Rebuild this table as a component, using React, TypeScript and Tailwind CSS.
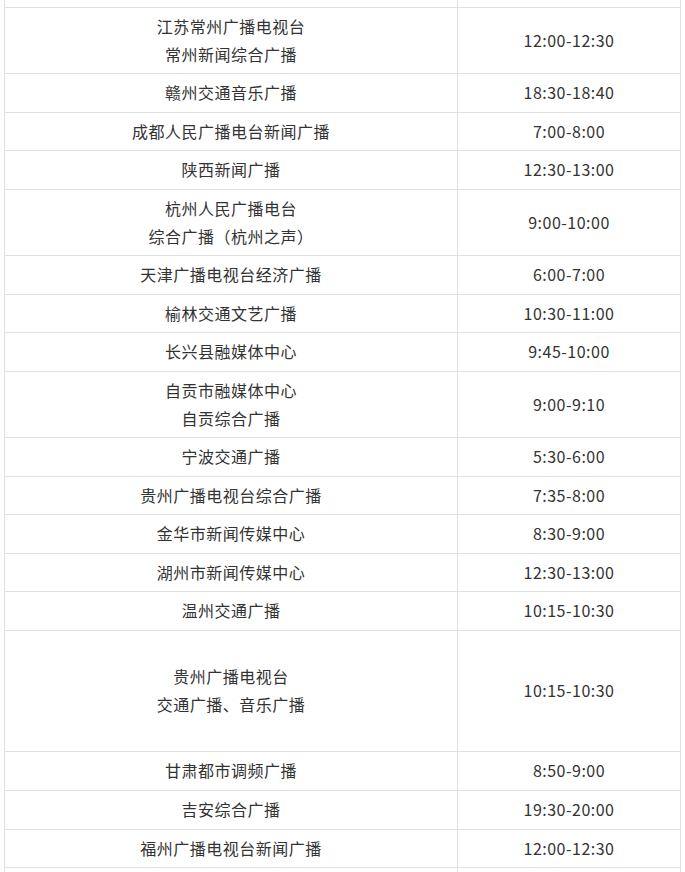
const rows: { name: string[]; time: string; h: string }[] = [
  { name: ["江苏常州广播电视台", "常州新闻综合广播"], time: "12:00-12:30", h: "h-[66px]" },
  { name: ["赣州交通音乐广播"], time: "18:30-18:40", h: "h-[39px]" },
  { name: ["成都人民广播电台新闻广播"], time: "7:00-8:00", h: "h-[38px]" },
  { name: ["陕西新闻广播"], time: "12:30-13:00", h: "h-[39px]" },
  { name: ["杭州人民广播电台", "综合广播（杭州之声）"], time: "9:00-10:00", h: "h-[66px]" },
  { name: ["天津广播电视台经济广播"], time: "6:00-7:00", h: "h-[39px]" },
  { name: ["榆林交通文艺广播"], time: "10:30-11:00", h: "h-[38px]" },
  { name: ["长兴县融媒体中心"], time: "9:45-10:00", h: "h-[39px]" },
  { name: ["自贡市融媒体中心", "自贡综合广播"], time: "9:00-9:10", h: "h-[66px]" },
  { name: ["宁波交通广播"], time: "5:30-6:00", h: "h-[39px]" },
  { name: ["贵州广播电视台综合广播"], time: "7:35-8:00", h: "h-[38px]" },
  { name: ["金华市新闻传媒中心"], time: "8:30-9:00", h: "h-[39px]" },
  { name: ["湖州市新闻传媒中心"], time: "12:30-13:00", h: "h-[38px]" },
  { name: ["温州交通广播"], time: "10:15-10:30", h: "h-[39px]" },
  { name: ["贵州广播电视台", "交通广播、音乐广播"], time: "10:15-10:30", h: "h-[121px]" },
  { name: ["甘肃都市调频广播"], time: "8:50-9:00", h: "h-[39px]" },
  { name: ["吉安综合广播"], time: "19:30-20:00", h: "h-[39px]" },
  { name: ["福州广播电视台新闻广播"], time: "12:00-12:30", h: "h-[38px]" },
];

export default function App() {
  return (
    <div
      className="w-[685px] h-[872px] overflow-hidden bg-white text-[#333] text-[16px] tracking-[0.5px] leading-[28px]"
      style={{ fontFamily: '"Noto Sans CJK SC", "Noto Sans", sans-serif' }}
    >
      <div className="ml-[4px] w-[677px] border-l border-r border-[#e0e0e0]">
        {/* partial row cut off at the top */}
        <div className="grid grid-cols-[453px_1fr] h-[7px]">
          <div className="border-r border-[#e0e0e0]" />
          <div />
        </div>
        {rows.map((r, i) => (
          <div key={i} className={`grid grid-cols-[453px_1fr] border-t border-[#e0e0e0] ${r.h}`}>
            <div className="flex flex-col items-center justify-center pb-[2px] border-r border-[#e0e0e0] text-center">
              {r.name.map((n) => (
                <p key={n}>{n}</p>
              ))}
            </div>
            <div className="flex items-center justify-center pb-[2px]">{r.time}</div>
          </div>
        ))}
        <div className="grid grid-cols-[453px_1fr] border-t border-[#e0e0e0] h-[20px]">
          <div className="border-r border-[#e0e0e0]" />
          <div />
        </div>
      </div>
    </div>
  );
}
